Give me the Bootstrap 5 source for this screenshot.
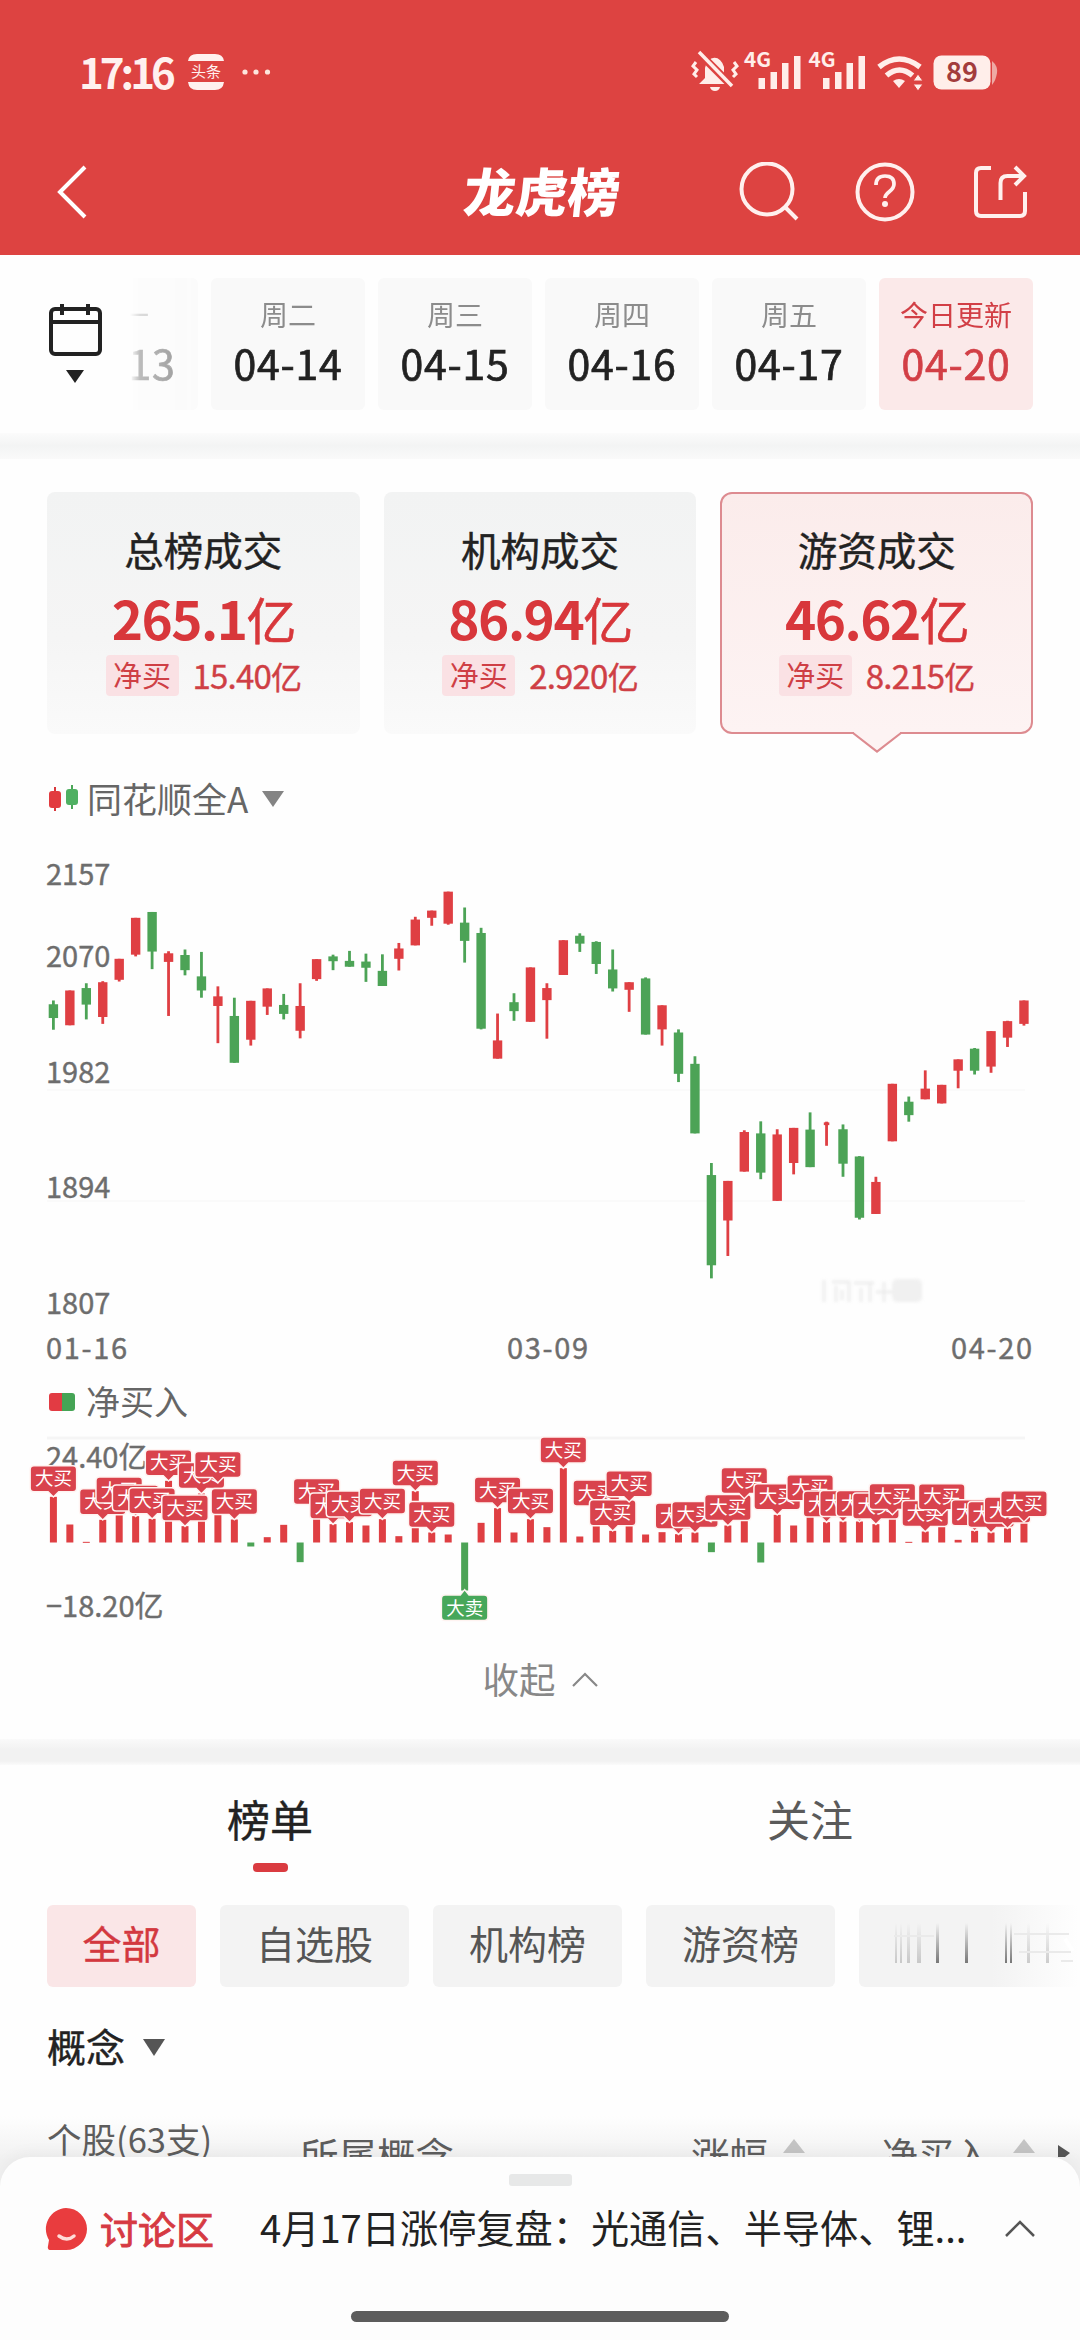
<!DOCTYPE html>
<html lang="zh-CN">
<head>
<meta charset="utf-8">
<meta name="viewport" content="width=device-width, initial-scale=1">
<title>龙虎榜</title>
<link href="https://cdn.jsdelivr.net/npm/bootstrap@5.3.0/dist/css/bootstrap.min.css" rel="stylesheet">
<style>
  body { font-family: "Noto Sans CJK SC", sans-serif; background: #fefefe; color: #222; line-height: 1; }
  svg { display: block; flex: none; }
  .screen { width: 1080px; height: 2340px; }
  .med { -webkit-text-stroke: .4px currentColor; }
  .red { color: #d8373b; }
  .topbar { height: 255px; background: #dd4341; color: #fff1ef; }
  .status { height: 144px; padding: 0 56px 0 79px; }
  .clock { font-size: 42px; font-weight: 700; letter-spacing: -4px; width: 109px; padding-bottom: 2px; }
  .titlebar { height: 96px; }
  .page-title { font-size: 52px; font-weight: 900; transform: skewX(-6deg); margin-left: 376px; width: 160px; padding-bottom: 4px; white-space: nowrap; color: #fff; }
  .dates { height: 178px; padding: 23px 47px 0 47px; }
  .strip { width: 903px; gap: 13px; -webkit-mask-image: linear-gradient(90deg, transparent 0, rgba(0,0,0,.3) 10px, rgba(0,0,0,.45) 55px, #000 80px); mask-image: linear-gradient(90deg, transparent 0, rgba(0,0,0,.3) 10px, rgba(0,0,0,.45) 55px, #000 80px); }
  .day { width: 154px; height: 132px; flex: none; border-radius: 6px; background: #f9f9f9; text-align: center; padding-top: 21px; }
  .day .wk { font-size: 28px; line-height: 30px; color: #8c8c8c; }
  .day .dt { font-size: 41px; line-height: 50px; margin-top: 8px; letter-spacing: .8px; -webkit-text-stroke-width: .7px; }
  .day.today { background: #fbe9e9; }
  .day.today .wk, .day.today .dt { color: #d23f46; }
  .band { height: 26px; background: linear-gradient(#fbfbfb, #f3f4f4 50%, #fafafa); }
  .band-two { background: linear-gradient(#fafafa, #f2f2f2 40%, #f2f2f2 85%, #fbfbfb); }
  .stats { padding: 33px 47px 0; gap: 24px; height: 297px; }
  .stat { position: relative; width: 313px; height: 242px; border-radius: 8px; background: linear-gradient(#f2f3f3, #f5f5f5 60%, #fafafa); padding-top: 35px; }
  .stat .nm { font-size: 39.5px; line-height: 44px; }
  .stat .big { font-size: 53px; line-height: 60px; margin-top: 16px; letter-spacing: -1.5px; font-weight: 700; }
  .stat .big span { font-weight: 400; font-size: 50px; -webkit-text-stroke: .6px currentColor; }
  .stat .net { margin-top: 7px; gap: 14px; color: #cf3f45; }
  .stat .tagbox { width: 73px; height: 41px; background: #fae1e4; border-radius: 4px; font-size: 29px; line-height: 39px; text-align: center; }
  .stat .amt { font-size: 33px; line-height: 40px; letter-spacing: -.8px; }
  .stat .amt span { font-size: 31px; }
  .stat.sel { background: linear-gradient(#fbeceb, #fdf3f3); border: 2px solid #dd8b90; border-radius: 12px; padding-top: 33px; }
  .stat.sel svg { position: absolute; left: 130px; top: 237px; }
  .legend { padding-left: 48px; color: #666; }
  .chart-text { font-size: 29px; fill: #6d6d6d; stroke: #6d6d6d; stroke-width: .4px; }
  .collapse-row { height: 46px; color: #888; font-size: 36.5px; gap: 16px; padding-bottom: 2px; }
  .tabs { height: 140px; font-size: 43px; }
  .tabs > div { height: 107px; position: relative; }
  .tabs .off { color: #5a5a5a; }
  .tabs .bar { width: 35px; height: 9px; border-radius: 4px; background: #da3b40; }
  .filters { padding-left: 47px; gap: 24px; height: 82px; }
  .chip { width: 189px; height: 82px; background: #f3f3f3; border-radius: 6px; color: #555; font-size: 39px; line-height: 75px; text-align: center; flex: none; }
  .chip.on { width: 149px; background: #fae6e7; color: #d3383f; }
  .chip.cut { background: linear-gradient(90deg, #f3f3f3 60%, #fefefe); width: 220px; }
  .concept { height: 60px; margin-top: 28px; padding-left: 47px; font-size: 39px; gap: 18px; }
  .concept svg { margin-top: 4px; }
  .thead { margin-top: 8px; height: 110px; color: #5d5d5d; font-size: 38.5px; background: linear-gradient(#fefefe 30%, #f1f1f1 70%); }
  .sheet { position: absolute; left: 0; top: 2157px; width: 1080px; height: 183px; background: #fdfdfd; border-radius: 30px 30px 0 0; box-shadow: 0 -4px 16px rgba(0,0,0,.04); }
  .handle { width: 63px; height: 12px; border-radius: 3px; background: #e7e8e8; margin-top: 17px; }
  .talk { height: 86px; padding-left: 45px; }
  .talk span { padding-bottom: 3px; }
  .home { width: 378px; height: 11px; border-radius: 6px; background: #5c5c5c; margin-top: 39px; }
</style>
<script src="https://cdn.jsdelivr.net/npm/bootstrap@5.3.0/dist/js/bootstrap.bundle.min.js"></script>
</head>
<body>
<div class="screen position-relative overflow-hidden d-flex flex-column">

  <header class="topbar flex-shrink-0">
    <div class="status d-flex align-items-center">
      <div class="clock">17:16</div>
      <svg width="36" height="36" viewBox="0 0 36 36">
        <path fill="#fff1ef" d="M9 0h18q8 0 9 7H0Q1 0 9 0zM0 28h36q-1 8-9 8H9q-8 0-9-8z"/>
        <text x="18" y="23" font-size="15" text-anchor="middle" fill="#fff1ef">头条</text>
      </svg>
      <svg class="ms-3" width="32" height="8" viewBox="0 0 32 8" fill="#fde6dd"><circle cx="5" cy="4" r="2.6"/><circle cx="16" cy="4" r="2.6"/><circle cx="27.500" cy="4" r="2.600"/></svg>
      <svg class="ms-auto overflow-visible" width="334" height="44" viewBox="689 49 334 44" fill="#ffeeea">
        <path d="M704 73V67a10 14 0 0 1 19-1v8l8 9h-33l6-6z"/>
        <path d="M709 86h10q-1 4-5 4t-5-4z"/>
        <path d="M697 51l35 35" stroke="#dd4341" stroke-width="8"/>
        <path d="M698 51l33 34" stroke="#ffeeea" stroke-width="3.500"/>
        <path d="M695 61l-3 4 4 4-3 4 3 3M733 61l3 4-4 4 3 4-3 3" fill="none" stroke="#ffeeea" stroke-width="3"/>
        <g id="sig">
          <text x="743" y="66" font-size="20" font-weight="700" textLength="27" lengthAdjust="spacingAndGlyphs">4G</text>
          <rect x="757.500" y="77" width="6.500" height="11"/><rect x="769.500" y="71" width="6.500" height="17"/><rect x="781" y="62" width="6.500" height="26"/><rect x="793" y="55" width="6.500" height="33"/>
        </g>
        <use href="#sig" x="64.500"/>
        <g fill="none" stroke="#ffeeea" stroke-width="5.500">
          <path d="M878 66q20-16 41 0"/><path d="M885.500 74.500q13-11 26 0"/>
        </g>
        <path d="M892 80q6-4 12 0l-6 7z"/>
        <path d="M917 73l5 7h-10zM917 90l5-7h-10z" stroke="#dd4341" stroke-width="1"/>
        <rect x="932.500" y="54.500" width="57" height="34" rx="8"/>
        <path d="M991 60q6 5 5 12t-5 12z" fill="#eeaaa4"/>
        <text x="961" y="81" font-size="27" font-weight="700" text-anchor="middle" fill="#a33c3c">89</text>
      </svg>
    </div>
    <div class="titlebar d-flex align-items-center">
      <svg style="margin-left:56px" width="32" height="54" viewBox="56 165 32 54"><path d="M85 167L60 192l25 25" fill="none" stroke="#fff" stroke-width="4"/></svg>
      <div class="page-title">龙虎榜</div>
      <svg style="margin-left:114px" width="292" height="60" viewBox="737 162 292 60" fill="none" stroke="#fff0ee" stroke-width="4">
        <circle cx="766" cy="189" r="25.500"/><path d="M784 207l12 12"/>
        <circle cx="884" cy="192" r="27.500"/>
        <path d="M875 185q0-9 9-9t9 8q0 4-4.500 7.500T884 198" stroke-width="3.700"/><circle cx="884" cy="204" r="3" fill="#fff0ee" stroke="none"/>
        <path d="M990 168h-10q-5 0-5 5v38q0 5 5 5h39q5 0 5-5v-19"/><path d="M999.500 200v-17q0-7 7-7h16M1014 167l9 9-9 9"/>
      </svg>
    </div>
  </header>

  <section class="dates d-flex flex-shrink-0">
    <svg style="margin-top:25px" width="56" height="84" viewBox="47 303 56 84">
      <rect x="51" y="309" width="49" height="45" rx="4" fill="none" stroke="#222" stroke-width="4"/>
      <path d="M51 322h49M62 304v11M88 304v11" stroke="#222" stroke-width="4"/><path d="M66 370h18l-9 13z" fill="#222"/>
    </svg>
    <div class="strip d-flex justify-content-end overflow-hidden ms-auto">
      <div class="day"><div class="wk">周一</div><div class="dt med">04-13</div></div>
      <div class="day"><div class="wk">周二</div><div class="dt med">04-14</div></div>
      <div class="day"><div class="wk">周三</div><div class="dt med">04-15</div></div>
      <div class="day"><div class="wk">周四</div><div class="dt med">04-16</div></div>
      <div class="day"><div class="wk">周五</div><div class="dt med">04-17</div></div>
      <div class="day today"><div class="wk">今日更新</div><div class="dt med">04-20</div></div>
    </div>
  </section>
  <div class="band flex-shrink-0"></div>

  <section class="stats d-flex flex-shrink-0 text-center">
    <div class="stat"><div class="nm med">总榜成交</div><div class="big red">265.1<span>亿</span></div>
      <div class="net d-flex justify-content-center"><div class="tagbox">净买</div><div class="amt med">15.40<span>亿</span></div></div></div>
    <div class="stat"><div class="nm med">机构成交</div><div class="big red">86.94<span>亿</span></div>
      <div class="net d-flex justify-content-center"><div class="tagbox">净买</div><div class="amt med">2.920<span>亿</span></div></div></div>
    <div class="stat sel"><div class="nm med">游资成交</div><div class="big red">46.62<span>亿</span></div>
      <div class="net d-flex justify-content-center"><div class="tagbox">净买</div><div class="amt med">8.215<span>亿</span></div></div>
      <svg width="50" height="24" viewBox="0 0 50 24"><path d="M2 0h46v3L25 21 2 3z" fill="#fdf3f3"/><path d="M1 2l24 18.500L49 2" fill="none" stroke="#dd8b90" stroke-width="2.200"/></svg>
    </div>
  </section>

  <section class="flex-shrink-0">
    <div class="legend d-flex align-items-center" style="height:84px;padding-top:2px">
      <svg width="30" height="28" viewBox="0 0 30 28"><path d="M7 2v24" stroke="#d8373b" stroke-width="2"/><rect x="1" y="6" width="12" height="17" rx="3" fill="#e23b3f"/><path d="M24 0v24" stroke="#4ba658" stroke-width="2"/><rect x="18" y="4" width="12" height="16" rx="3" fill="#4fb062"/></svg>
      <span style="font-size:35px;margin-left:9px;padding-bottom:3px">同花顺全A</span>
      <svg style="margin-left:14px" width="23" height="18" viewBox="0 0 23 18"><path d="M0 1h22L11 17z" fill="#848484"/></svg>
    </div>
    <svg id="candles" width="1080" height="540" viewBox="0 0 1080 540">
      <path d="M47 250h978M47 361h978" stroke="#fafafa" stroke-width="2"/>
      <g class="chart-text">
        <text x="46" y="44.500">2157</text><text x="46" y="126.500">2070</text><text x="46" y="242.500">1982</text><text x="46" y="357.500">1894</text><text x="46" y="473.500">1807</text>
        <text x="46" y="518.500" textLength="81">01-16</text><text x="507" y="518.500" textLength="81">03-09</text><text x="951" y="518.500" textLength="81">04-20</text>
      </g>
      <g style="filter:blur(1.500px)" stroke="#ededed" stroke-width="3" fill="none"><path d="M824 440v22M832 442h17v20M836 446v16M842 450v10M854 443h20M861 448v14M870 442v20M876 452h18M884 442v20"/><rect x="892" y="439" width="30" height="23" rx="5" fill="#f0f0f0" stroke="none"/></g>
    </svg>
    <div class="legend d-flex align-items-center" style="height:44px">
      <svg width="28" height="18" viewBox="0 0 28 18"><path d="M14 0H4Q1 0 1 3v12q0 3 3 3h10z" fill="#e23b43"/><path d="M14 0h10q3 0 3 3v12q0 3-3 3H14z" fill="#45a455"/></svg>
      <span style="font-size:34px;margin-left:10px;padding-bottom:2px">净买入</span>
    </div>
    <svg id="flows" width="1080" height="233" viewBox="0 0 1080 233">
      <path d="M47 14h978" stroke="#f5f5f5" stroke-width="3"/>
      <g class="chart-text"><text x="46" y="43.500">24.40亿</text><text x="46" y="192.500">−18.20亿</text></g>
    </svg>
  </section>
  <div class="collapse-row d-flex flex-shrink-0 align-items-center justify-content-center">
    <span>收起</span><svg width="26" height="17" viewBox="0 0 26 17"><path d="M1 15L13 3l12 12" fill="none" stroke="#888" stroke-width="2.200"/></svg>
  </div>
  <div style="height:36px" class="flex-shrink-0"></div>
  <div class="band band-two flex-shrink-0"></div>

  <nav class="tabs d-flex flex-shrink-0">
    <div class="w-50 d-flex flex-column align-items-center justify-content-end"><span class="med">榜单</span><div class="bar" style="margin-top:23px"></div></div>
    <div class="w-50 d-flex flex-column align-items-center off justify-content-end" style="padding-bottom:32px"><span>关注</span></div>
  </nav>
  <div class="filters d-flex flex-shrink-0 overflow-hidden">
    <div class="chip on med">全部</div><div class="chip">自选股</div><div class="chip">机构榜</div><div class="chip">游资榜</div>
    <div class="chip cut">
      <svg width="220" height="82" viewBox="860 1902 220 82">
        <defs><linearGradient id="fd" x1="0" y1="1920" x2="0" y2="1960" gradientUnits="userSpaceOnUse"><stop offset="0" stop-color="#777" stop-opacity="0"/><stop offset="1" stop-color="#777"/></linearGradient></defs>
        <g fill="url(#fd)"><path opacity=".35" d="M896 1920h2v40h-2zM901 1920h2v40h-2zM908 1920h3v40h-3zM918 1920h4v40h-4zM1028 1920h3v40h-3zM1047 1920h3v40h-3z"/><path d="M937 1920h3v40h-3zM966 1920h3v40h-3zM1006 1920h2v40h-2zM1011 1920h2v40h-2z"/></g>
        <path d="M895 1933h40M1015 1931h55M1020 1949h52M1062 1958h12" stroke="#eaeaea" stroke-width="2"/><path d="M1066 1936l8 12" stroke="#fff" stroke-width="4"/>
      </svg>
    </div>
  </div>
  <div class="concept d-flex align-items-center flex-shrink-0"><span class="med">概念</span><svg width="22" height="17" viewBox="0 0 22 17"><path d="M0 0h22L11 17z" fill="#555"/></svg></div>
  <div class="thead d-flex align-items-start flex-shrink-0">
    <div style="width:253px;margin-left:47px;padding-top:38px;font-size:34.500px">个股(63支)</div>
    <div style="width:391px;padding-top:52px">所属概念</div>
    <div class="d-flex" style="width:191px;padding-top:52px;gap:15px">涨幅<svg width="22" height="20" viewBox="0 0 22 20"><path d="M0 18h22L11 4z" fill="#c4c4c4"/></svg></div>
    <div class="d-flex" style="padding-top:52px;font-size:36px;gap:23px">净买入<svg width="22" height="20" viewBox="0 0 22 20"><path d="M0 18h22L11 4z" fill="#c4c4c4"/></svg><svg width="14" height="24" viewBox="0 0 14 24"><path d="M0 10l12 8-5 4H0z" fill="#555"/></svg></div>
  </div>

  <footer class="sheet d-flex flex-column align-items-center">
    <div class="handle"></div>
    <div class="talk d-flex align-items-center w-100">
      <svg width="42" height="42" viewBox="0 0 42 42"><path d="M21 0a21 21 0 1 1 0 42H6q-4 0-3-4l1-6A21 21 0 0 1 21 0z" fill="#e93c3e"/><path d="M14 28q8 6 15 0" fill="none" stroke="#ffdcd8" stroke-width="3.500" stroke-linecap="round"/></svg>
      <span style="font-size:38px;color:#d63a42;margin-left:13px;width:160px;-webkit-text-stroke:.9px #d63a42">讨论区</span>
      <span class="text-nowrap" style="font-size:38.200px;width:710px">4月17日涨停复盘：光通信、半导体、锂...</span>
      <svg style="margin-left:34px" width="32" height="20" viewBox="0 0 32 20"><path d="M2 17L16 3l14 14" fill="none" stroke="#555" stroke-width="2.500"/></svg>
    </div>
    <div class="home"></div>
  </footer>
</div>

<script>
const NS = 'http://www.w3.org/2000/svg', RED = '#df3f43', GREEN = '#4ca356';
const X = i => 53.4 + 16.45 * i;
function add(parent, name, attrs, text) {
  const el = document.createElementNS(NS, name);
  for (const k in attrs) el.setAttribute(k, attrs[k]);
  if (text) el.textContent = text;
  parent.appendChild(el);
  return el;
}
// colour, high, body top, body bottom, low
const quotes = `g466,477,517,551 r437,437,538,538 g416,430,478,521 r410,413,514,534 r345,345,406,411 r226,226,333,338 g209,209,324,375 r323,329,354,511 g318,334,378,393 g325,396,437,458
r425,454,482,590 g458,511,647,647 r467,467,580,597 r431,431,484,508 g447,479,505,521 r416,482,554,576 r346,346,404,409 g333,338,352,378 g322,351,368,368 g330,353,371,412
g332,380,424,424 r299,315,345,379 r223,231,306,306 r205,205,226,249 r150,150,243,246 g196,240,293,356 g255,270,548,550 r504,582,635,635 g445,471,497,525 r370,370,528,528
r416,430,465,577 r291,291,392,392 g271,278,301,325 g294,296,360,389 g318,376,431,440 r413,413,435,499 g399,402,565,565 r480,480,550,597 g550,559,679,703 g628,650,852,852
g938,973,1235,1273 r990,990,1105,1208 r843,848,963,963 g817,852,966,985 r840,855,1048,1048 r836,836,938,971 g791,841,950,950 r818,820,828,888 g826,840,940,978 g918,919,1097,1102
r978,993,1086,1086 r708,708,875,875 g745,760,799,818 r669,722,753,753 r711,711,765,765 r637,637,670,721 g604,606,670,681 r555,555,658,676 r525,526,574,601 r466,466,534,539`.split(/\s+/);
const candles = document.getElementById('candles');
quotes.forEach((q, i) => {
  const c = q[0] === 'r' ? RED : GREEN, [h, t, b, l] = q.slice(1).split(',').map(v => v / 2.904);
  const w = i === 47 ? 5.5 : 9.4;
  add(candles, 'rect', { x: X(i) - 1.4, y: h, width: 2.8, height: l - h, fill: c });
  add(candles, 'rect', { x: X(i) - w / 2, y: t, width: w, height: b - t, fill: c });
});

// bars that carry a label, by the label's top; the others by the bar's own end
const tags = {0:288,3:357,4:322,5:346,6:354,7:240,8:376,9:278,10:245,11:356,16:326,17:370,18:364,20:355,22:271,23:395,27:322,29:355,31:202,33:331,34:390,35:303,38:400,39:395,41:374,42:293,44:342,46:315,47:364,48:362,49:362,50:370,51:341,53:392,54:342,56:390,57:395,58:382,59:363};
const plain = {1:462,2:514,12:528,13:500,14:463,15:575,19:465,21:497,24:492,25:660,26:457,28:486,30:470,32:498,36:492,37:485,40:545,43:576,45:465,52:514,55:508};
const flows = document.getElementById('flows'), base = 118.5;
for (let i = 0; i < 60; i++) {
  const v = tags[i] !== undefined ? tags[i] + 91 : plain[i];
  const y = base + (v - 516) / 3;
  add(flows, 'rect', { x: X(i) - 3.5, y: Math.min(y, base), width: 7, height: Math.max(1, Math.abs(y - base)), fill: y > base ? GREEN : RED });
}
function tag(i, top, label, fill, up) {
  const x = X(i), g = add(flows, 'g', {});
  const d = up
    ? `M${x-22.5} ${top+3}q0-3 3-3h15.500l4-5 4 5h15.500q3 0 3 3v18q0 3-3 3h-39q-3 0-3-3z`
    : `M${x-22.5} ${top+3}q0-3 3-3h39q3 0 3 3v18.500q0 3-3 3h-14.500l-5 5-5-5h-14.500q-3 0-3-3z`;
  add(g, 'path', { d, fill, stroke: '#fff3f1', 'stroke-width': 3, 'paint-order': 'stroke' });
  add(g, 'text', { x, y: top + 18.8, 'font-size': 18.5, 'text-anchor': 'middle', fill: '#fff' }, label);
}
for (const i in tags) tag(+i, base + (tags[i] - 516) / 3, '大买', '#d9434d');
tag(25, base + (676 - 516) / 3, '大卖', '#47a75a', true);
</script>
</body>
</html>
